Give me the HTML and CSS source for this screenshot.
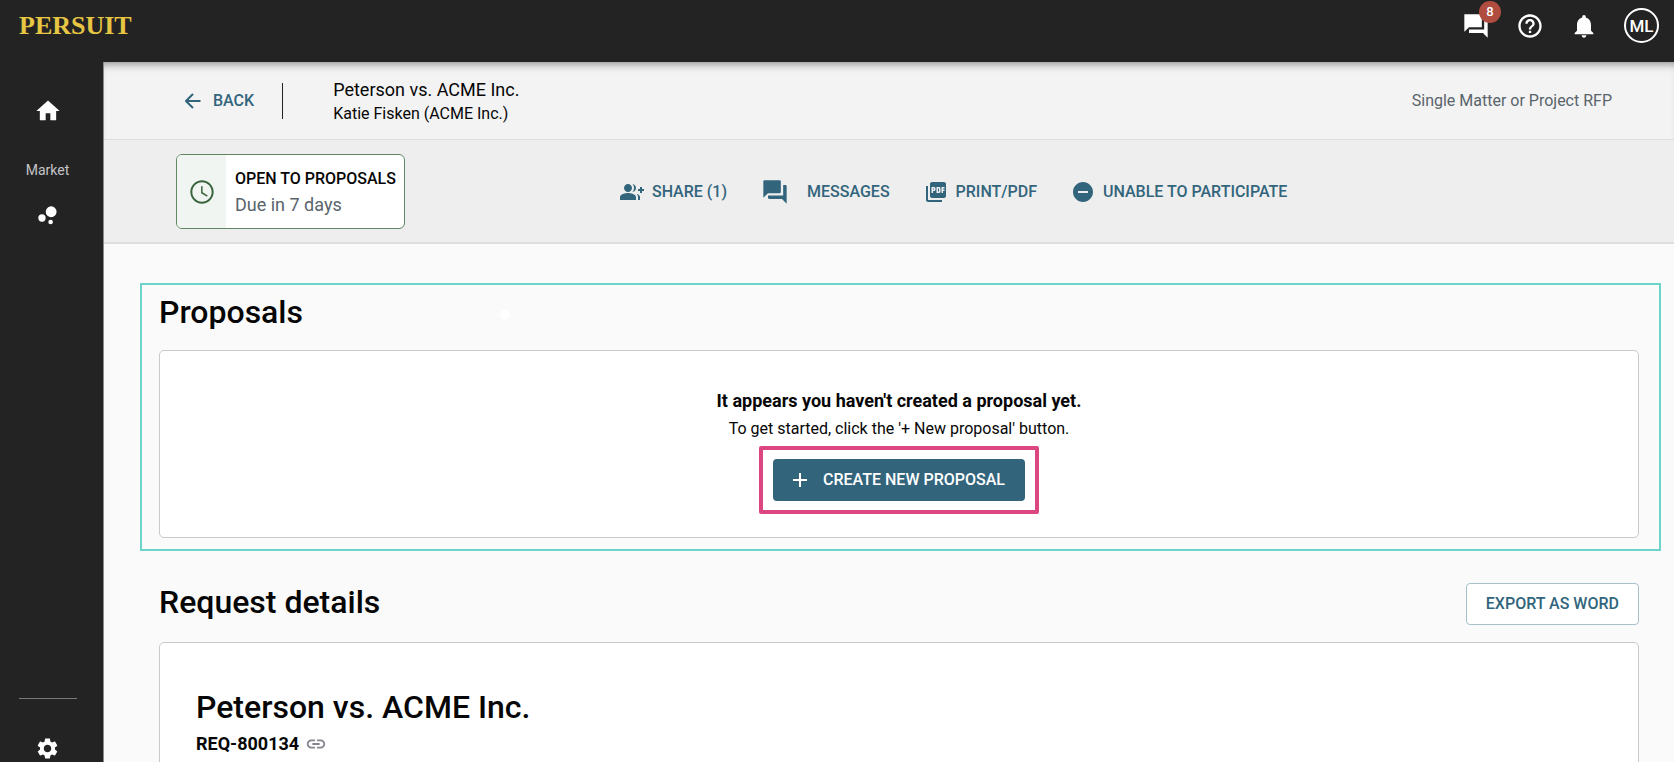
FILE: index.html
```html
<!DOCTYPE html>
<html lang="en">
<head>
<meta charset="utf-8">
<title>Peterson vs. ACME Inc.</title>
<link rel="stylesheet" href="styles.css">
</head>
<body>
<header class="topbar">
  <a class="logo" href="#">PERSUIT</a>
  <div class="topbar-tools">
    <button class="icon-button" type="button" aria-label="Messages, 8 unread">
      <svg class="icon-large" viewBox="0 0 24 24"><path d="M22 6h-3v9H6v3h12l4 4V6zm-5 7V2H2v15l4-4h11z"/></svg>
      <span class="badge">8</span>
    </button>
    <button class="icon-button" type="button" aria-label="Help">
      <svg class="icon-large" viewBox="0 0 24 24"><path d="M11 18h2v-2h-2v2zm1-16C6.48 2 2 6.48 2 12s4.48 10 10 10 10-4.48 10-10S17.52 2 12 2zm0 18c-4.41 0-8-3.59-8-8s3.59-8 8-8 8 3.59 8 8-3.59 8-8 8zm0-14c-2.21 0-4 1.79-4 4h2c0-1.1.9-2 2-2s2 .9 2 2c0 2-3 1.75-3 5h2c0-2.25 3-2.5 3-5 0-2.21-1.79-4-4-4z"/></svg>
    </button>
    <button class="icon-button" type="button" aria-label="Notifications">
      <svg class="icon-large" viewBox="0 0 24 24"><path d="M12 22c1.1 0 2-.9 2-2h-4c0 1.1.89 2 2 2zm6-6v-5c0-3.07-1.64-5.64-4.5-6.32V4c0-.83-.67-1.5-1.5-1.5s-1.5.67-1.5 1.5v.68C7.63 5.36 6 7.92 6 11v5l-2 2v1h16v-1l-2-2z"/></svg>
    </button>
    <button class="avatar" type="button">ML</button>
  </div>
</header>
<div class="layout">
  <nav class="sidebar">
    <a href="#" aria-label="Home"><svg class="icon-large" viewBox="0 0 24 24"><path d="M10 20v-6h4v6h5v-8h3L12 3 2 12h3v8z"/></svg></a>
    <span class="sidebar-label">Market</span>
    <a href="#" aria-label="Market"><svg class="icon-medium" viewBox="0 0 24 24"><circle cx="6.700" cy="14.400" r="3.500"/><circle cx="15" cy="18.300" r="2.200"/><circle cx="15.500" cy="8.400" r="5.200"/></svg></a>
    <div class="sidebar-bottom">
      <a href="#" aria-label="Settings"><svg class="icon-medium" viewBox="0 0 24 24"><path d="M19.14 12.94c.04-.3.06-.61.06-.94 0-.32-.02-.64-.07-.94l2.03-1.58c.18-.14.23-.41.12-.61l-1.92-3.32c-.12-.22-.37-.29-.59-.22l-2.39.96c-.5-.38-1.03-.7-1.62-.94l-.36-2.54c-.04-.24-.24-.41-.48-.41h-3.84c-.24 0-.43.17-.47.41l-.36 2.54c-.59.24-1.13.57-1.62.94l-2.39-.96c-.22-.08-.47 0-.59.22L2.74 8.87c-.12.21-.08.47.12.61l2.03 1.58c-.05.3-.09.63-.09.94s.02.64.07.94l-2.03 1.58c-.18.14-.23.41-.12.61l1.92 3.32c.12.22.37.29.59.22l2.39-.96c.5.38 1.03.7 1.62.94l.36 2.54c.05.24.24.41.48.41h3.84c.24 0 .44-.17.47-.41l.36-2.54c.59-.24 1.13-.56 1.62-.94l2.39.96c.22.08.47 0 .59-.22l1.92-3.32c.12-.22.07-.47-.12-.61l-2.01-1.58zM12 15.6c-1.98 0-3.6-1.62-3.6-3.6s1.62-3.6 3.6-3.6 3.6 1.62 3.6 3.6-1.62 3.6-3.6 3.6z"/></svg></a>
    </div>
  </nav>
  <main class="main">
    <div class="matter-bar">
      <a class="back" href="#">
        <svg class="icon-arrow" viewBox="0 0 16 16"><path d="M15.500 8H1.500M8 1L1 8l7 7"/></svg>
        BACK
      </a>
      <div class="matter">
        <div class="matter-title">Peterson vs. ACME Inc.</div>
        <div class="matter-owner">Katie Fisken (ACME Inc.)</div>
      </div>
      <div class="matter-type">Single Matter or Project RFP</div>
    </div>
    <div class="action-bar">
      <div class="status">
        <div class="status-icon"><svg class="icon-large" viewBox="0 0 24 24"><path d="M11.990 2C6.470 2 2 6.480 2 12s4.470 10 9.990 10C17.520 22 22 17.520 22 12S17.520 2 11.990 2zM12 20.300c-4.600 0-8.300-3.700-8.300-8.300s3.700-8.300 8.300-8.300 8.300 3.700 8.300 8.300-3.700 8.300-8.300 8.300zm.5-13.300H11.200v6l5.050 3.050.7-1.130-4.450-2.670z"/></svg></div>
        <div class="status-text">
          <div class="status-title">OPEN TO PROPOSALS</div>
          <div class="status-due">Due in 7 days</div>
        </div>
      </div>
      <div class="actions">
        <button class="action" type="button">
          <svg class="icon-small" viewBox="0 0 24 24"><path d="M22 9V7h-2v2h-2v2h2v2h2v-2h2V9zM8 12c2.210 0 4-1.790 4-4s-1.790-4-4-4-4 1.790-4 4 1.790 4 4 4zm0 1c-2.670 0-8 1.340-8 4v3h16v-3c0-2.660-5.330-4-8-4zm4.510-8.950C13.430 5.110 14 6.490 14 8s-.57 2.890-1.490 3.950C14.470 11.700 16 10.040 16 8s-1.530-3.700-3.490-3.950zm4.020 9.780C17.420 14.660 18 15.700 18 17v3h2v-3c0-1.450-1.590-2.510-3.470-3.170z"/></svg>
          SHARE (1)
        </button>
        <button class="action action-messages" type="button">
          <svg class="icon-large" viewBox="0 0 24 24"><path d="M21 6h-2v9H6v2c0 .55.45 1 1 1h11l4 4V7c0-.55-.45-1-1-1zm-4 6V3c0-.55-.45-1-1-1H3c-.55 0-1 .45-1 1v14l4-4h10c.55 0 1-.45 1-1z"/></svg>
          MESSAGES
        </button>
        <button class="action" type="button">
          <svg class="icon-small" viewBox="0 0 24 24"><path d="M20 2H8c-1.100 0-2 .9-2 2v12c0 1.100.9 2 2 2h12c1.100 0 2-.9 2-2V4c0-1.100-.9-2-2-2zm-8.500 7.500c0 .83-.67 1.500-1.500 1.500H9v2H7.500V7H10c.83 0 1.500.67 1.500 1.500v1zm5 2c0 .83-.67 1.500-1.500 1.500h-2.500V7H15c.83 0 1.500.67 1.500 1.500v3zm4-3H19v1h1.500V11H19v2h-1.500V7h3v1.500zM9 9.500h1v-1H9v1zM4 6H2v14c0 1.100.9 2 2 2h14v-2H4V6zm10 5.500h1v-3h-1v3z"/></svg>
          PRINT/PDF
        </button>
        <button class="action" type="button">
          <svg class="icon-small" viewBox="0 0 24 24"><path d="M12 2C6.480 2 2 6.480 2 12s4.480 10 10 10 10-4.480 10-10S17.520 2 12 2zm5 11H7v-2h10v2z"/></svg>
          UNABLE TO PARTICIPATE
        </button>
      </div>
    </div>
    <section class="proposals">
      <span class="dot"></span>
      <h2 class="heading">Proposals</h2>
      <div class="card empty">
        <p class="empty-title">It appears you haven't created a proposal yet.</p>
        <p class="empty-hint">To get started, click the '+ New proposal' button.</p>
        <div class="callout">
          <button class="create" type="button">
            <svg class="icon-plus" viewBox="0 0 14 14"><path d="M7 0v14M0 7h14"/></svg>
            CREATE NEW PROPOSAL
          </button>
        </div>
      </div>
    </section>
    <section class="details">
      <div class="details-head">
        <h2 class="heading">Request details</h2>
        <button class="export" type="button">EXPORT AS WORD</button>
      </div>
      <div class="card request">
        <h1 class="heading">Peterson vs. ACME Inc.</h1>
        <div class="request-id">REQ-800134
          <a class="link" href="#" aria-label="Copy link"><svg class="icon-link" viewBox="0 0 24 24"><path d="M3.900 12c0-1.710 1.390-3.100 3.100-3.100h4V7H7c-2.760 0-5 2.240-5 5s2.240 5 5 5h4v-1.900H7c-1.710 0-3.100-1.390-3.100-3.100zM8 13h8v-2H8v2zm9-6h-4v1.900h4c1.710 0 3.100 1.390 3.100 3.100s-1.390 3.100-3.100 3.100h-4V17h4c2.760 0 5-2.240 5-5s-2.240-5-5-5z"/></svg></a>
        </div>
      </div>
    </section>
  </main>
</div>
</body>
</html>
```

FILE: styles.css
```css
* { box-sizing: border-box; }

body {
  margin: 0;
  height: 100vh;
  overflow: hidden;
  display: flex;
  flex-direction: column;
  font: 16px/24px Roboto, "Liberation Sans", sans-serif;
  color: #060606;
  background: #fafafa;
}

button {
  font: inherit;
  font-weight: 500;
  border: 0;
  background: none;
  padding: 0;
  cursor: pointer;
}

a { color: inherit; text-decoration: none; }
svg { display: block; fill: currentColor; flex: none; }
h1, h2, p { margin: 0; }

.icon-large { width: 28px; height: 28px; }
.icon-medium { width: 25px; height: 25px; }
.icon-small { width: 24px; height: 24px; }
.icon-link { width: 22px; height: 22px; }
.icon-arrow { width: 16px; height: 16px; fill: none; stroke: currentColor; stroke-width: 2; }
.icon-plus { width: 14px; height: 14px; fill: none; stroke: currentColor; stroke-width: 2; }

/* Top bar */
.topbar {
  position: relative;
  z-index: 1;
  flex: none;
  height: 62px;
  padding: 8px 15px 0 19px;
  display: flex;
  justify-content: space-between;
  align-items: flex-start;
  color: #fff;
  background: #232323;
}

.logo {
  font: bold 26px/36px "Liberation Serif", serif;
  color: #e6c643;
}

.topbar-tools { display: flex; align-items: center; gap: 26px; }
.icon-button { position: relative; color: #fff; }

.badge {
  position: absolute;
  top: -11px;
  right: -11px;
  width: 22px;
  height: 22px;
  border-radius: 50%;
  background: #b04c40;
  font-size: 13px;
  line-height: 22px;
  text-align: center;
}

.avatar {
  width: 35px;
  height: 35px;
  border: 2px solid #fff;
  border-radius: 50%;
  color: #fff;
  font-size: 17px;
  line-height: 30px;
}

/* Shell */
.layout { flex: 1; display: flex; min-height: 0; }

.sidebar {
  position: relative;
  z-index: 2;
  flex: none;
  width: 104px;
  padding: 35px 8px 0 0;
  display: flex;
  flex-direction: column;
  align-items: center;
  color: #fff;
  background: #232323;
  border-right: 1px solid #8c8c8c;
}

.sidebar-label { margin: 33px 0 21px; font-size: 14px; line-height: 24px; color: #c4c4c8; }

.sidebar-bottom {
  width: 58px;
  margin-top: auto;
  padding: 37px 0 1px;
  display: flex;
  justify-content: center;
  border-top: 1px solid #77777d;
}

.main { flex: 1; min-width: 0; overflow: hidden; }

/* Matter bar */
.matter-bar {
  height: 78px;
  padding: 0 62px 0 81px;
  display: flex;
  align-items: center;
  background: #f3f3f3;
  border-bottom: 1px solid #dedede;
  box-shadow: inset 0 8px 8px -6px #8a8a8a;
}

.back {
  height: 36px;
  padding-right: 28px;
  display: flex;
  align-items: center;
  gap: 12px;
  font-weight: 500;
  color: #32657c;
  border-right: 1px solid #222;
}

.matter { margin-left: 50px; padding-top: 2px; }
.matter-title { font-size: 18px; }
.matter-type { margin-left: auto; color: #59646b; }

/* Action bar */
.action-bar {
  padding: 14px 72px 13px;
  display: flex;
  align-items: center;
  background: #eee;
  border-bottom: 2px solid #dfdfdf;
}

.status {
  display: flex;
  height: 75px;
  background: #fff;
  border: 1px solid #5f8763;
  border-radius: 6px;
  overflow: hidden;
}

.status-icon {
  width: 49px;
  display: grid;
  place-items: center;
  color: #38653c;
  background: #f0f5f1;
}

.status-text { padding: 11px 8px 11px 9px; line-height: 26px; }
.status-title { font-weight: 500; }
.status-due { font-size: 18px; color: #59646b; }

.actions { margin-left: 215px; display: flex; align-items: center; gap: 34px; }
.action { display: flex; align-items: center; gap: 8px; color: #32657c; }
.action-messages { gap: 18px; }

/* Content */
.heading { font-size: 32px; line-height: 38px; font-weight: 500; }

.card {
  background: #fff;
  border: 1px solid #c9c9ce;
  border-radius: 5px;
}

.proposals {
  position: relative;
  margin: 39px 13px 0 36px;
  padding: 8px 20px 11px 17px;
  border: 2px solid #6dd3cb;
}

.proposals .heading { margin-bottom: 19px; }

.dot {
  position: absolute;
  top: 25px;
  left: 358px;
  width: 10px;
  height: 10px;
  border-radius: 50%;
  background: #fff;
}

.empty {
  padding: 36px 0 23px;
  display: flex;
  flex-direction: column;
  align-items: center;
}

.empty-title { font-size: 18px; line-height: 28px; font-weight: 700; }
.empty-hint { line-height: 28px; }

.callout {
  margin-top: 3px;
  padding: 9px 10px;
  border: 4px solid #dc4681;
  border-radius: 2px;
}

.create {
  height: 42px;
  padding: 0 20px;
  display: flex;
  align-items: center;
  gap: 16px;
  color: #fff;
  background: #32657c;
  border-radius: 4px;
}

.details { margin: 32px 35px 0 55px; }
.details-head { display: flex; justify-content: space-between; align-items: flex-start; margin-bottom: 17px; }

.export {
  height: 42px;
  padding: 0 19px;
  color: #32657c;
  background: #fff;
  border: 1px solid #a9bfca;
  border-radius: 4px;
}

.request { padding: 45px 36px; }

.request-id {
  margin-top: 6px;
  display: flex;
  align-items: center;
  gap: 6px;
  font-size: 18px;
  font-weight: 700;
}

.link { color: #85858f; }
```
